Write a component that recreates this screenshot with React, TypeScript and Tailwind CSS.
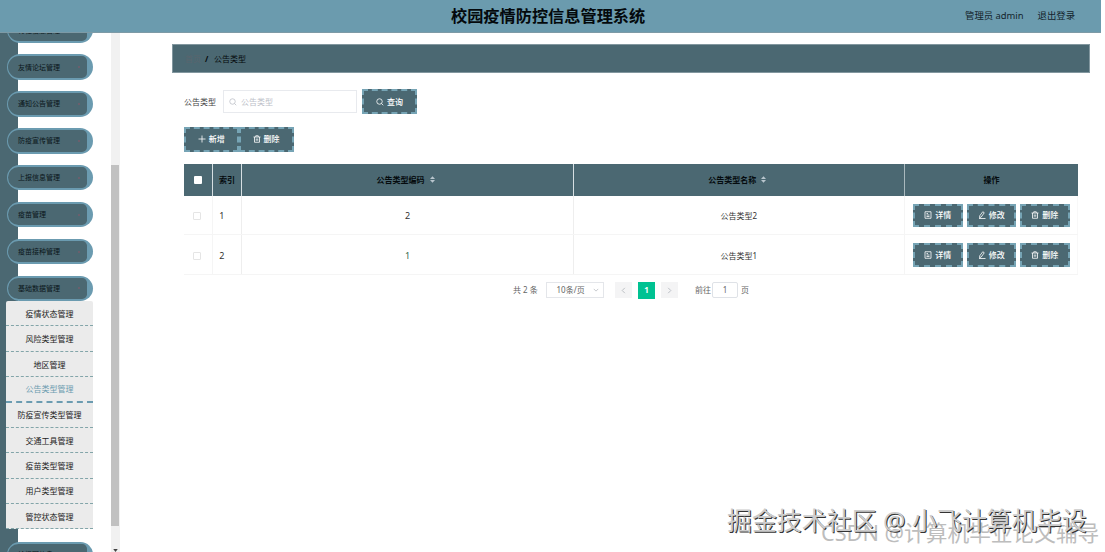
import React from 'react';
import { clsx } from 'clsx';

const menuBefore = [
    '友情论坛管理',
    '通知公告管理',
    '防疫宣传管理',
    '上报信息管理',
    '疫苗管理',
    '疫苗接种管理',
    '基础数据管理'
];

const subMenu = [
    '疫情状态管理',
    '风险类型管理',
    '地区管理',
    '公告类型管理',
    '防疫宣传类型管理',
    '交通工具管理',
    '疫苗类型管理',
    '用户类型管理',
    '管控状态管理'
];

const rows = [
    { index: 1, code: '2', name: '公告类型2' },
    { index: 2, code: '1', name: '公告类型1' }
];

type IconName = 'search' | 'plus' | 'trash' | 'detail' | 'edit';

const iconPaths: Record<IconName, string> = {
    search: 'M7 1.5a5.5 5.5 0 1 0 0 11a5.5 5.5 0 1 0 0-11M11 11L14.5 14.5',
    plus: 'M8 1v14M1 8h14',
    trash: 'M1 4h14M5.5 4V1.5h5V4M3 4v10.5h10V4M6.5 7v4.5M9.5 7v4.5',
    detail: 'M2 1.5h12v13H2zM5 5h3M5 8h6M5 11h6',
    edit: 'M9.5 1.5l3 2l-6 8.5l-3.5 1.5l.5-4zM2 15h13'
};

const Icon: React.FC<{ name: IconName; className?: string }> = ({ name, className }) => (
    <svg viewBox="0 0 16 16" className={clsx('size-2 shrink-0', className)} fill="none" stroke="currentColor" strokeWidth="1.6">
        <path d={iconPaths[name]} />
    </svg>
);

interface ActionButtonProps {
    icon: IconName;
    label: string;
    className: string;
}

const ActionButton: React.FC<ActionButtonProps> = ({ icon, label, className }) => (
    <button
        type="button"
        className={clsx(
            'flex shrink-0 items-center justify-center gap-[3px] border-2 border-dashed border-[#76a4b5] bg-[#4b6872] text-[8px] font-medium leading-none text-white',
            className
        )}
    >
        <Icon name={icon} />
        <span>{label}</span>
    </button>
);

const MenuPill: React.FC<{ label: string }> = ({ label }) => (
    <div className="mb-[11.4px] h-[25.5px] w-[86px] shrink-0 rounded-[13px] bg-[#6b9bb0] py-[2px] pr-[6px] pl-px">
        <div className="flex h-full items-center justify-between rounded-l-[11px] rounded-r-[5px] bg-[#4b6872] pr-[7px] pl-[10px] text-[7px] leading-none text-[#0a1519]">
            <span>{label}</span>
            <span className="size-[2px] rounded-full bg-[#745d6d]" />
        </div>
    </div>
);

const Sidebar: React.FC = () => (
    <aside className="flex h-full w-[120px] shrink-0 overflow-hidden">
        <nav className="h-full w-[110.5px] shrink-0 overflow-hidden bg-linear-to-r from-[#4b6872] from-[18px] to-white to-[18px] pl-[7px]">
            <div className="-mt-[15.1px] flex flex-col">
                <MenuPill label="行程信息管理" />
                {menuBefore.map(label => (
                    <MenuPill key={label} label={label} />
                ))}
            </div>
            <ul className="-mt-[11.4px] mb-[12.4px] -ml-px w-[87px] overflow-hidden rounded-t-[2px] bg-[#ebebeb]">
                {subMenu.map(label => (
                    <li
                        key={label}
                        className={clsx(
                            'flex h-[25.35px] items-center justify-center border-b border-dashed pt-px text-[8px] leading-none',
                            label === '公告类型管理'
                                ? 'border-b-2 border-[#6b9bb0] text-[#6b9bb0]'
                                : 'border-[#83a5a9] text-[#222]'
                        )}
                    >
                        {label}
                    </li>
                ))}
            </ul>
            <MenuPill label="轮播图信息" />
        </nav>
        <div className="flex h-full w-[9px] flex-col items-center bg-[#f1f1f1]">
            <div className="mt-[132px] h-[361.5px] w-[8px] shrink-0 bg-[#c1c1c1]" />
            <svg viewBox="0 0 6 4" className="mt-[23px] h-[3px] w-[5px] shrink-0" fill="#444">
                <path d="M0 0h6L3 4z" />
            </svg>
        </div>
    </aside>
);

const SortCaret: React.FC = () => (
    <svg viewBox="0 0 6 8" className="h-[7px] w-[5px]" fill="#b9c6ce">
        <path d="M3 0L6 3.4H0zM3 8L0 4.6h6z" />
    </svg>
);

const columns = 'grid grid-cols-[29.3px_28.3px_332px_331.5px_172.9px]';

const DataTable: React.FC = () => (
    <div className="w-[894px]">
        <div className={clsx(columns, 'h-[31.5px] bg-[#4b6872] text-[8px] font-bold leading-none text-[#050b0e]')}>
            <div className="flex items-center justify-center border-r border-[#d6dfe2] pt-px">
                <span className="size-2 rounded-[1px] bg-white" />
            </div>
            <div className="flex items-center justify-center border-r border-[#d6dfe2] pt-px">索引</div>
            <div className="flex items-center justify-center gap-[5px] border-r border-[#d6dfe2] pr-[3px]">
                公告类型编码 <SortCaret />
            </div>
            <div className="flex items-center justify-center gap-[5px] border-r border-[#a9b9be] pr-[3px]">
                公告类型名称 <SortCaret />
            </div>
            <div className="flex items-center justify-center pt-px">操作</div>
        </div>
        {rows.map(row => (
            <div key={row.index} className={clsx(columns, 'h-[39.7px] border-b border-[#f5f5f5] text-[8px] leading-none text-[#333]')}>
                <div className="flex items-center justify-center border-r border-[#f5f5f5] pt-[2px] pr-[2px]">
                    <span className="size-2 rounded-[1px] border border-[#e5e5e5] bg-white" />
                </div>
                <div className="flex items-center border-r border-[#eee] pt-[2px] pl-[6px] text-[9px]">{row.index}</div>
                <div className={clsx('flex items-center justify-center border-r border-[#eee] pt-[2px] pl-px text-[9px]', row.index === 2 && 'text-[#356a4c]')}>
                    {row.code}
                </div>
                <div className="flex items-center justify-center border-r border-[#f5f5f5] pt-[2px]">{row.name}</div>
                <div className="flex items-center gap-1 border-r border-[#f8f8f8] pt-px pl-2">
                    <ActionButton icon="detail" label="详情" className="h-[23.5px] w-[49.5px]" />
                    <ActionButton icon="edit" label="修改" className="h-[23.5px] w-[49.5px]" />
                    <ActionButton icon="trash" label="删除" className="h-[23.5px] w-[49.5px]" />
                </div>
            </div>
        ))}
    </div>
);

const Chevron: React.FC<{ d: string; className: string }> = ({ d, className }) => (
    <svg viewBox="0 0 8 8" className={className} fill="none" stroke="#b4b8be" strokeWidth="1">
        <path d={d} />
    </svg>
);

const Pagination: React.FC = () => (
    <div className="mt-[7.5px] flex h-4 items-center pl-[329px] text-[8px] leading-none text-[#666]">
        <span className="w-[32.5px]">共 2 条</span>
        <div className="flex h-4 w-[58px] items-center justify-between border border-[#e4e6ea] pr-1 pl-[10px]">
            <span>10条/页</span>
            <Chevron d="M1 2.5l3 3l3-3" className="size-[6px]" />
        </div>
        <button type="button" className="ml-[11.5px] flex h-4 w-[17px] items-center justify-center bg-[#f4f4f5]">
            <Chevron d="M5.5 1l-3 3l3 3" className="size-[7px]" />
        </button>
        <button type="button" className="ml-[6px] flex h-[17px] w-[17px] items-center justify-center bg-[#00c292] font-bold text-white">1</button>
        <button type="button" className="ml-[6px] flex h-4 w-[17px] items-center justify-center bg-[#f4f4f5]">
            <Chevron d="M2.5 1l3 3l-3 3" className="size-[7px]" />
        </button>
        <span className="ml-[17px]">前往</span>
        <span className="ml-px flex h-4 w-[26px] items-center justify-center rounded-[2px] border border-[#dfe2e7]">1</span>
        <span className="ml-[3px]">页</span>
    </div>
);

export default function App() {
    return (
        <div className="relative flex h-[552px] w-[1105px] flex-col overflow-hidden bg-white font-['Noto_Sans','Noto_Sans_CJK_SC',sans-serif]">
            <header className="flex h-[32.5px] w-[1101px] shrink-0 items-center border-b border-[#7d9aa6] bg-[#6b9bae] text-[#04090c]">
                <h1 className="ml-[451px] w-[514px] text-[16.2px] font-bold leading-none">校园疫情防控信息管理系统</h1>
                <span className="w-[72.5px] text-[9.4px] leading-none text-[#13242c]">管理员 admin</span>
                <span className="text-[9.4px] leading-none text-[#13242c]">退出登录</span>
            </header>
            <div className="flex min-h-0 flex-1">
                <Sidebar />
                <main className="ml-[52px] flex flex-col pt-[11.5px]">
                    <div className="flex h-[29px] w-[918px] items-center border border-[#82979f] bg-[#4b6872] pl-[12px] text-[8px] leading-none text-[#05090b]">
                        <span className="w-[20px] text-[#5a656e]">首页</span>
                        <span className="w-[9px] font-bold">/</span>
                        <span>公告类型</span>
                    </div>
                    <div className="pl-[12px]">
                        <div className="mt-[16px] flex h-[25px] items-center text-[8px] leading-none">
                            <span className="w-[39px] text-[#444]">公告类型</span>
                            <div className="flex h-[23px] w-[134px] items-center gap-[4px] border border-[#e8eaee] pl-[5px] text-[#bcc0c8]">
                                <Icon name="search" />
                                <span>公告类型</span>
                            </div>
                            <ActionButton icon="search" label="查询" className="ml-[5px] h-[25px] w-[55px]" />
                        </div>
                        <div className="mt-[12.5px] mb-[12.5px] flex">
                            <ActionButton icon="plus" label="新增" className="h-[25px] w-[54.5px]" />
                            <ActionButton icon="trash" label="删除" className="h-[25px] w-[55px]" />
                        </div>
                        <DataTable />
                        <Pagination />
                    </div>
                </main>
            </div>
            <div className="absolute top-[522px] left-[821px] whitespace-nowrap text-[21.7px] leading-none text-[#bdbdbd]">CSDN @计算机毕业论文辅导</div>
            <div className="absolute top-[508px] left-[727px] whitespace-nowrap text-[24.95px] leading-none text-[#ccc] [text-shadow:1px_1px_0_#333]">掘金技术社区 @ 小飞计算机毕设</div>
        </div>
    );
}
